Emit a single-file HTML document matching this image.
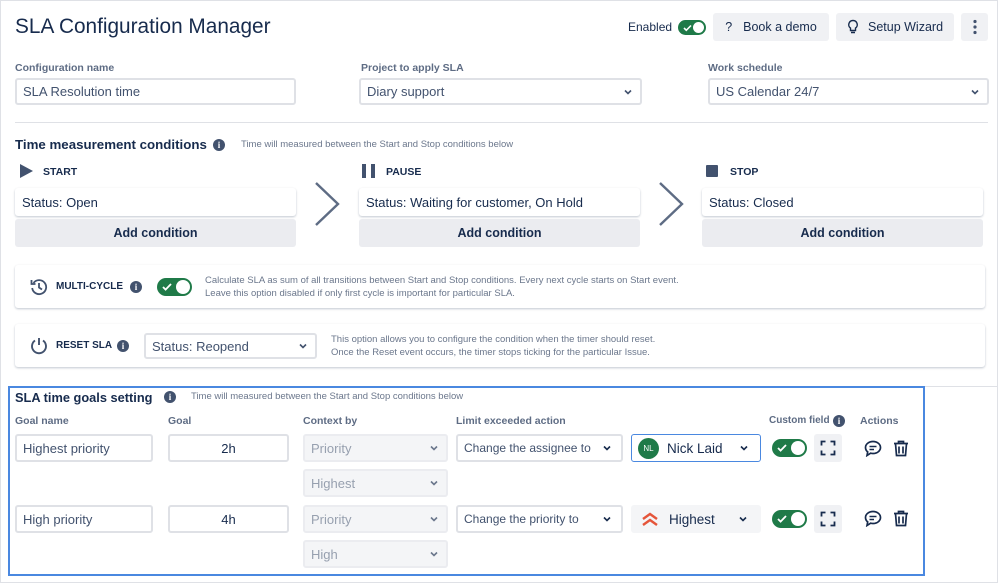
<!DOCTYPE html>
<html><head><meta charset="utf-8"><style>
*{box-sizing:border-box;margin:0;padding:0}
body{width:999px;height:584px;background:#fff;font-family:"Liberation Sans",sans-serif;color:#172B4D;position:relative;overflow:hidden}
.a{position:absolute}
.frame{left:0;top:0;width:998px;height:583px;border:1px solid #dfe1e6}
.lbl{font-size:10.5px;font-weight:bold;color:#5E6C84}
.inp{background:#fff;border:2px solid #dfe1e6;border-radius:3px;font-size:13px;color:#42526E;padding:0 6px;display:flex;align-items:center;white-space:nowrap;overflow:hidden}
.sel{justify-content:space-between}
.chev{width:12px;height:12px;flex:none}
.dis{background:#f4f5f7;border-color:#ebecf0;color:#97A0AF}
.btn{background:#f0f1f4;border-radius:3px;font-size:12.5px;display:flex;align-items:center;justify-content:center;color:#172B4D}
.card{background:#fff;border-radius:3px;box-shadow:0 1px 2px rgba(9,30,66,.25);font-size:13px;color:#172B4D;display:flex;align-items:center;padding:0 7px}
.add{background:#ebecf0;border-radius:3px;font-size:12.5px;font-weight:bold;color:#172B4D;display:flex;align-items:center;justify-content:center}
.h2{font-size:13.3px;font-weight:bold;color:#172B4D}
.sub{font-size:9.5px;color:#6B778C}
.info{width:12px;height:12px;border-radius:50%;background:#42526E;color:#fff;font-size:9px;font-weight:bold;text-align:center;line-height:12px;font-family:"Liberation Serif",serif}
.tog{background:#1f7a48;border-radius:10px}
.tog::after{content:"";position:absolute;right:2px;top:2px;bottom:2px;aspect-ratio:1;background:#fff;border-radius:50%}
.tog svg{position:absolute;left:5px;top:50%;transform:translateY(-50%)}
.ttl{font-size:10.5px;font-weight:bold;color:#172B4D}
.opt{box-shadow:0 1px 2px rgba(9,30,66,.25);border-radius:3px;background:#fff}
</style></head><body>
<div class="a frame"></div>
<div class="a" style="left:925px;top:386px;width:73px;border-top:1px solid #dfe1e6"></div>

<div class="a" style="left:15px;top:15px;font-size:20.8px;color:#172B4D">SLA Configuration Manager</div>
<div class="a" style="left:628px;top:20px;font-size:12px">Enabled</div>
<div class="a tog" style="left:678px;top:20px;width:28px;height:15px"><svg width="9" height="7" viewBox="0 0 9 7"><path d="M1 3.5l2.3 2.3L8 1" stroke="#fff" stroke-width="1.6" fill="none"/></svg></div>
<div class="a btn" style="left:713px;top:13px;width:116px;height:28px"><span style="margin-right:11px">?</span>Book a demo</div>
<div class="a btn" style="left:836px;top:13px;width:118px;height:28px"><svg width="12" height="16" viewBox="0 0 12 16" style="margin-right:9px"><path d="M6 1.5a4.2 4.2 0 0 0-2.5 7.6v2.4h5V9.1A4.2 4.2 0 0 0 6 1.5zM4 13.5h4" stroke="#172B4D" stroke-width="1.4" fill="none"/></svg>Setup Wizard</div>
<div class="a btn" style="left:961px;top:13px;width:27px;height:28px"><svg width="4" height="16"><circle cx="2" cy="2.5" r="1.6" fill="#42526E"/><circle cx="2" cy="8" r="1.6" fill="#42526E"/><circle cx="2" cy="13.5" r="1.6" fill="#42526E"/></svg></div>

<div class="a lbl" style="left:15px;top:62px">Configuration name</div>
<div class="a inp" style="left:15px;top:78px;width:281px;height:27px">SLA Resolution time</div>
<div class="a lbl" style="left:361px;top:62px">Project to apply SLA</div>
<div class="a inp sel" style="left:359px;top:78px;width:283px;height:27px">Diary support<svg class="chev" viewBox="0 0 12 12"><path d="M3 4.5l3 3 3-3" stroke="#42526E" stroke-width="1.6" fill="none"/></svg></div>
<div class="a lbl" style="left:708px;top:62px">Work schedule</div>
<div class="a inp sel" style="left:708px;top:78px;width:281px;height:27px">US Calendar 24/7<svg class="chev" viewBox="0 0 12 12"><path d="M3 4.5l3 3 3-3" stroke="#42526E" stroke-width="1.6" fill="none"/></svg></div>
<div class="a" style="left:15px;top:122px;width:973px;border-top:1px solid #dfe1e6"></div>

<div class="a h2" style="left:15px;top:137px">Time measurement conditions</div>
<div class="a info" style="left:213px;top:139px">i</div>
<div class="a sub" style="left:241px;top:139px">Time will measured between the Start and Stop conditions below</div>

<svg class="a" style="left:20px;top:164px" width="14" height="14"><path d="M0 0L13 7L0 14z" fill="#42526E"/></svg>
<div class="a ttl" style="left:43px;top:166px">START</div>
<svg class="a" style="left:362px;top:164px" width="14" height="14"><rect x="0" y="0" width="4" height="14" fill="#42526E"/><rect x="9" y="0" width="4" height="14" fill="#42526E"/></svg>
<div class="a ttl" style="left:386px;top:166px">PAUSE</div>
<svg class="a" style="left:706px;top:165px" width="13" height="13"><rect width="12" height="12" rx="1" fill="#42526E"/></svg>
<div class="a ttl" style="left:730px;top:166px">STOP</div>

<div class="a card" style="left:15px;top:188px;width:281px;height:28px">Status: Open</div>
<div class="a add" style="left:15px;top:219px;width:281px;height:28px">Add condition</div>
<div class="a card" style="left:359px;top:188px;width:281px;height:28px">Status: Waiting for customer, On Hold</div>
<div class="a add" style="left:359px;top:219px;width:281px;height:28px">Add condition</div>
<div class="a card" style="left:702px;top:188px;width:281px;height:28px">Status: Closed</div>
<div class="a add" style="left:702px;top:219px;width:281px;height:28px">Add condition</div>
<svg class="a" style="left:314px;top:181px" width="28" height="46"><path d="M2 2l22 21L2 44" stroke="#5E6C84" stroke-width="2.4" fill="none"/></svg>
<svg class="a" style="left:658px;top:181px" width="28" height="46"><path d="M2 2l22 21L2 44" stroke="#5E6C84" stroke-width="2.4" fill="none"/></svg>

<div class="a opt" style="left:15px;top:265px;width:970px;height:43px"></div>
<svg class="a" style="left:30px;top:278px" width="18" height="18" viewBox="0 0 18 18"><path d="M3.5 5A7 7 0 1 1 2.2 10" stroke="#42526E" stroke-width="1.8" fill="none"/><path d="M1.5 2v4h4" stroke="#42526E" stroke-width="1.8" fill="none"/><path d="M9 5v4.5l3 2" stroke="#42526E" stroke-width="1.8" fill="none"/></svg>
<div class="a ttl" style="left:56px;top:281px;font-size:10px">MULTI-CYCLE</div>
<div class="a info" style="left:130px;top:281px">i</div>
<div class="a tog" style="left:157px;top:278px;width:35px;height:18px"><svg width="10" height="8" viewBox="0 0 10 8"><path d="M1 4l2.6 2.6L9 1" stroke="#fff" stroke-width="1.8" fill="none"/></svg></div>
<div class="a sub" style="left:205px;top:274px;line-height:13px">Calculate SLA as sum of all transitions between Start and Stop conditions. Every next cycle starts on Start event.<br>Leave this option disabled if only first cycle is important for particular SLA.</div>

<div class="a opt" style="left:15px;top:324px;width:970px;height:43px"></div>
<svg class="a" style="left:30px;top:337px" width="18" height="18" viewBox="0 0 18 18"><path d="M5 3.5A7 7 0 1 0 13 3.5" stroke="#42526E" stroke-width="1.9" fill="none"/><path d="M9 1v7" stroke="#42526E" stroke-width="1.9"/></svg>
<div class="a ttl" style="left:56px;top:340px;font-size:10px">RESET SLA</div>
<div class="a info" style="left:117px;top:340px">i</div>
<div class="a inp sel" style="left:144px;top:333px;width:173px;height:26px">Status: Reopend<svg class="chev" viewBox="0 0 12 12"><path d="M3 4.5l3 3 3-3" stroke="#42526E" stroke-width="1.6" fill="none"/></svg></div>
<div class="a sub" style="left:331px;top:333px;line-height:13px">This option allows you to configure the condition when the timer should reset.<br>Once the Reset event occurs, the timer stops ticking for the particular Issue.</div>

<div class="a" style="left:8px;top:386px;width:917px;height:190px;border:2px solid #4a88e0"></div>
<div class="a h2" style="left:15px;top:390px;font-size:12.8px">SLA time goals setting</div>
<div class="a info" style="left:164px;top:391px">i</div>
<div class="a sub" style="left:191px;top:391px">Time will measured between the Start and Stop conditions below</div>
<div class="a lbl" style="left:15px;top:415px">Goal name</div>
<div class="a lbl" style="left:168px;top:415px">Goal</div>
<div class="a lbl" style="left:303px;top:415px">Context by</div>
<div class="a lbl" style="left:456px;top:415px">Limit exceeded action</div>
<div class="a lbl" style="left:769px;top:415px;font-size:10px">Custom field</div>
<div class="a info" style="left:833px;top:415px">i</div>
<div class="a lbl" style="left:860px;top:415px">Actions</div>

<div class="a inp" style="left:15px;top:434px;width:138px;height:28px">Highest priority</div>
<div class="a inp" style="left:168px;top:434px;width:121px;height:28px;justify-content:center;color:#172B4D">2h</div>
<div class="a inp sel dis" style="left:303px;top:434px;width:145px;height:28px">Priority<svg class="chev" viewBox="0 0 12 12"><path d="M3 4.5l3 3 3-3" stroke="#6B778C" stroke-width="1.6" fill="none"/></svg></div>
<div class="a inp sel dis" style="left:303px;top:469px;width:145px;height:28px">Highest<svg class="chev" viewBox="0 0 12 12"><path d="M3 4.5l3 3 3-3" stroke="#6B778C" stroke-width="1.6" fill="none"/></svg></div>
<div class="a inp sel" style="left:456px;top:434px;width:167px;height:28px;font-size:12px;padding-right:8px">Change the assignee to<svg class="chev" viewBox="0 0 12 12"><path d="M3 4.5l3 3 3-3" stroke="#172B4D" stroke-width="1.6" fill="none"/></svg></div>
<div class="a inp sel" style="left:631px;top:434px;width:130px;height:28px;border:1px solid #4a88e0;color:#172B4D;font-size:13.5px"><span style="display:flex;align-items:center"><span style="width:21px;height:21px;border-radius:50%;background:#1f7a48;color:#fff;font-size:8px;display:inline-flex;align-items:center;justify-content:center;margin-right:8px">NL</span>Nick Laid</span><svg class="chev" viewBox="0 0 12 12" style="margin-right:4px"><path d="M3 4.5l3 3 3-3" stroke="#172B4D" stroke-width="1.6" fill="none"/></svg></div>
<div class="a tog" style="left:772px;top:439px;width:35px;height:18px"><svg width="10" height="8" viewBox="0 0 10 8"><path d="M1 4l2.6 2.6L9 1" stroke="#fff" stroke-width="1.8" fill="none"/></svg></div>
<div class="a btn" style="left:814px;top:434px;width:28px;height:28px"><svg width="16" height="16" viewBox="0 0 16 16"><path d="M1.5 5.5v-4h4M10.5 1.5h4v4M14.5 10.5v4h-4M5.5 14.5h-4v-4" stroke="#172B4D" stroke-width="1.8" fill="none"/></svg></div>
<svg class="a" style="left:864px;top:440px" width="18" height="17" viewBox="0 0 18 17"><path d="M9 1.5c4.2 0 7.5 2.7 7.5 6s-3.3 6-7.5 6c-.8 0-1.6-.1-2.3-.3L3 15.5l.7-3.6C2.3 10.8 1.5 9.2 1.5 7.5c0-3.3 3.3-6 7.5-6z" stroke="#172B4D" stroke-width="1.7" fill="none"/><path d="M5.5 6.5h7M5.5 9.5h4.5" stroke="#172B4D" stroke-width="1.6"/></svg>
<svg class="a" style="left:893px;top:440px" width="16" height="17" viewBox="0 0 16 17"><path d="M1 3.5h14M5.5 3.5V1.5h5v2M2.5 3.5l1 12h9l1-12M6 6.5v7M10 6.5v7" stroke="#172B4D" stroke-width="1.7" fill="none"/></svg>

<div class="a inp" style="left:15px;top:505px;width:138px;height:28px">High priority</div>
<div class="a inp" style="left:168px;top:505px;width:121px;height:28px;justify-content:center;color:#172B4D">4h</div>
<div class="a inp sel dis" style="left:303px;top:505px;width:145px;height:28px">Priority<svg class="chev" viewBox="0 0 12 12"><path d="M3 4.5l3 3 3-3" stroke="#6B778C" stroke-width="1.6" fill="none"/></svg></div>
<div class="a inp sel dis" style="left:303px;top:540px;width:145px;height:28px">High<svg class="chev" viewBox="0 0 12 12"><path d="M3 4.5l3 3 3-3" stroke="#6B778C" stroke-width="1.6" fill="none"/></svg></div>
<div class="a inp sel" style="left:456px;top:505px;width:167px;height:28px;font-size:12px;padding-right:8px">Change the priority to<svg class="chev" viewBox="0 0 12 12"><path d="M3 4.5l3 3 3-3" stroke="#172B4D" stroke-width="1.6" fill="none"/></svg></div>
<div class="a inp sel" style="left:631px;top:505px;width:130px;height:28px;background:#f4f5f7;border-color:#f4f5f7;color:#172B4D;font-size:13.5px"><span style="display:flex;align-items:center"><svg width="18" height="16" viewBox="0 0 18 16" style="margin:0 10px 0 2px"><path d="M2 8l7-5 7 5M2 14l7-5 7 5" stroke="#e5553a" stroke-width="2.4" fill="none"/></svg>Highest</span><svg class="chev" viewBox="0 0 12 12" style="margin-right:4px"><path d="M3 4.5l3 3 3-3" stroke="#172B4D" stroke-width="1.6" fill="none"/></svg></div>
<div class="a tog" style="left:772px;top:510px;width:35px;height:18px"><svg width="10" height="8" viewBox="0 0 10 8"><path d="M1 4l2.6 2.6L9 1" stroke="#fff" stroke-width="1.8" fill="none"/></svg></div>
<div class="a btn" style="left:814px;top:505px;width:28px;height:28px"><svg width="16" height="16" viewBox="0 0 16 16"><path d="M1.5 5.5v-4h4M10.5 1.5h4v4M14.5 10.5v4h-4M5.5 14.5h-4v-4" stroke="#172B4D" stroke-width="1.8" fill="none"/></svg></div>
<svg class="a" style="left:864px;top:510px" width="18" height="17" viewBox="0 0 18 17"><path d="M9 1.5c4.2 0 7.5 2.7 7.5 6s-3.3 6-7.5 6c-.8 0-1.6-.1-2.3-.3L3 15.5l.7-3.6C2.3 10.8 1.5 9.2 1.5 7.5c0-3.3 3.3-6 7.5-6z" stroke="#172B4D" stroke-width="1.7" fill="none"/><path d="M5.5 6.5h7M5.5 9.5h4.5" stroke="#172B4D" stroke-width="1.6"/></svg>
<svg class="a" style="left:893px;top:510px" width="16" height="17" viewBox="0 0 16 17"><path d="M1 3.5h14M5.5 3.5V1.5h5v2M2.5 3.5l1 12h9l1-12M6 6.5v7M10 6.5v7" stroke="#172B4D" stroke-width="1.7" fill="none"/></svg>
</body></html>
